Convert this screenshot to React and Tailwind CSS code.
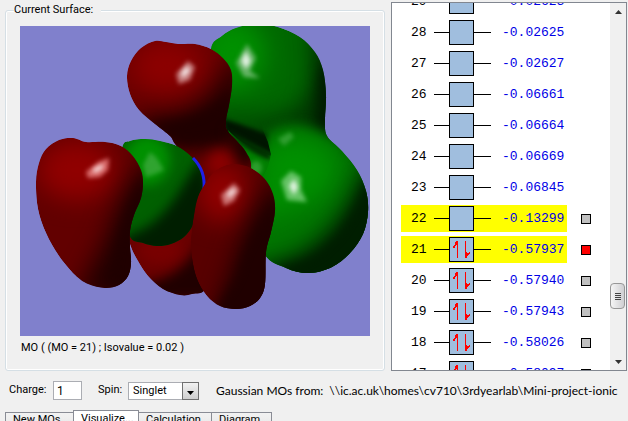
import { useState } from 'react';

const orbitals = [
    { id: 29, energy: '-0.02623' },
    { id: 28, energy: '-0.02625' },
    { id: 27, energy: '-0.02627' },
    { id: 26, energy: '-0.06661' },
    { id: 25, energy: '-0.06664' },
    { id: 24, energy: '-0.06669' },
    { id: 23, energy: '-0.06845' },
    { id: 22, energy: '-0.13299', frontier: true, surface: true },
    { id: 21, energy: '-0.57937', frontier: true, surface: true, occupied: true },
    { id: 20, energy: '-0.57940', surface: true, occupied: true },
    { id: 19, energy: '-0.57943', surface: true, occupied: true },
    { id: 18, energy: '-0.58026', surface: true, occupied: true },
    { id: 17, energy: '-0.58097', surface: true, occupied: true },
];

const tabs = [
    { name: 'New MOs...', width: 'w-[69px]' },
    { name: 'Visualize...', width: 'w-[66px]' },
    { name: 'Calculation...', width: 'w-[74px]' },
    { name: 'Diagram...', width: 'w-[61px]' },
];

// Closed Catmull-Rom curve through the given points
function smooth(points) {
    const n = points.length;
    const at = (i) => points[(i + n) % n];
    let d = `M${at(0)[0]} ${at(0)[1]}`;
    for (let i = 0; i < n; i++) {
        const [a, b, c, e] = [at(i - 1), at(i), at(i + 1), at(i + 2)];
        d += `C${b[0] + (c[0] - a[0]) / 6} ${b[1] + (c[1] - a[1]) / 6} ${c[0] - (e[0] - b[0]) / 6} ${c[1] - (e[1] - b[1]) / 6} ${c[0]} ${c[1]}`;
    }
    return d + 'Z';
}

const lobes = {
    green: smooth([[211, 49], [222, 36], [236, 28], [256, 24], [278, 27], [300, 37], [315, 52], [323, 70], [326, 95], [325, 120], [327, 136], [342, 151], [357, 170], [366, 191], [368, 212], [363, 234], [350, 253], [332, 267], [309, 273], [286, 268], [262, 250], [245, 185], [231, 150], [226, 128], [215, 90]]),
    redTop: smooth([[127, 76], [131, 61], [141, 48], [155, 41], [166, 42], [178, 44], [195, 44], [211, 49], [223, 58], [231, 70], [232, 86], [229, 105], [226, 120], [227, 130], [237, 141], [246, 152], [251, 168], [240, 200], [210, 205], [190, 165], [175, 144], [170, 136], [155, 124], [139, 110], [130, 94]]),
    redBottom: smooth([[129, 235], [131, 247], [138, 261], [148, 276], [163, 289], [180, 295], [192, 294], [206, 287], [212, 240], [195, 205], [160, 220], [135, 225]]),
    greenMid: smooth([[122, 148], [130, 141], [145, 139], [160, 141], [177, 146], [192, 157], [201, 170], [204, 185], [201, 204], [193, 225], [184, 237], [171, 244], [157, 246], [143, 243], [129, 235], [118, 190]]),
    redLeft: smooth([[36, 182], [39, 163], [46, 149], [59, 140], [73, 138], [86, 142], [105, 142], [121, 146], [133, 156], [141, 170], [143, 183], [141, 198], [134, 215], [130, 231], [130, 247], [131, 263], [128, 276], [119, 285], [105, 288], [88, 284], [75, 275], [59, 256], [46, 233], [38, 209]]),
    redFront: smooth([[205, 184], [213, 173], [224, 166], [236, 164], [251, 168], [265, 179], [273, 194], [275, 211], [271, 232], [266, 252], [265, 284], [260, 298], [250, 306], [236, 309], [220, 306], [207, 296], [197, 279], [192, 258], [191, 238], [194, 215], [198, 197]]),
};

function Glint({ points, core, color }) {
    return (
        <g>
            <polygon points={points} fill={color} filter="url(#soft2)" />
            <polygon points={core} fill="#fff" opacity="0.8" filter="url(#soft2)" />
        </g>
    );
}

function Surface() {
    return (
        <svg viewBox="20 26 350 310" preserveAspectRatio="none" className="block min-h-0 w-full flex-1 bg-[#8080cc]" role="img" aria-label="Molecular orbital surface">
            <defs>
                {Object.entries(lobes).map(([name, d]) => (
                    <clipPath id={name} key={name}>
                        <path d={d} />
                    </clipPath>
                ))}
                <clipPath id="greenFront">
                    <path d="M250 270V190L263 176C267 169 270 162 271 154L268 142L262 128V80H380V290H250Z" />
                </clipPath>
                <filter id="soft2" x="-50%" y="-50%" width="200%" height="200%" colorInterpolationFilters="sRGB">
                    <feGaussianBlur stdDeviation="2" />
                </filter>
                <filter id="soft6" x="-50%" y="-50%" width="200%" height="200%" colorInterpolationFilters="sRGB">
                    <feGaussianBlur stdDeviation="6" />
                </filter>
                <filter id="soft12" x="-50%" y="-50%" width="200%" height="200%" colorInterpolationFilters="sRGB">
                    <feGaussianBlur stdDeviation="12" />
                </filter>
            </defs>

            <g clipPath="url(#green)">
                <path d={lobes.green} fill="#006800" />
                <ellipse cx="232" cy="54" rx="34" ry="36" fill="#009000" filter="url(#soft12)" />
                <path d="M310 20L345 50V140H300C315 110 320 70 310 20Z" fill="#001c00" filter="url(#soft12)" />
                <path d="M215 114C250 128 285 122 330 84V132L270 142L218 130Z" fill="#003800" filter="url(#soft12)" />
                <path d="M320 70L335 60V138L314 128Z" fill="#001c00" filter="url(#soft6)" />
                <path d="M222 118C240 124 256 130 268 134L276 156L226 134Z" fill="#001500" filter="url(#soft2)" />
                <path d="M228 130C240 143 254 149 273 157L262 182L240 172Z" fill="#008000" />
                <path d="M228 130C240 137 256 144 271 154L270 160C253 154 239 145 228 130Z" fill="#002c00" filter="url(#soft2)" />
                <ellipse cx="256" cy="168" rx="6" ry="7" fill="#2c9c2c" filter="url(#soft2)" />
                <Glint points="247,44 256,58 250,71 260,78 244,77 236,63" core="246,51 251,61 246,69 241,61" color="#63b363" />

                <g clipPath="url(#greenFront)">
                    <path d="M272 132C290 120 315 127 335 142L385 200L350 290H240V190Z" fill="#007600" filter="url(#soft6)" />
                    <path d="M262 150C285 132 315 134 332 155C345 180 320 200 300 205L258 220Z" fill="#009000" filter="url(#soft12)" />
                    <path d="M385 170V295H250L255 266C310 262 345 225 365 165Z" fill="#001800" filter="url(#soft12)" />
                    <path d="M385 180V290H275L285 266C325 262 352 225 366 180Z" fill="#001e00" filter="url(#soft6)" />
                    <polygon points="278,139 290,132 294,137 284,146" fill="#309e30" filter="url(#soft2)" />
                </g>
                <Glint points="291,171 301,177 301,190 307,202 287,200 281,181" core="294,179 298,187 294,195 289,186" color="#65c365" />
            </g>

            <g clipPath="url(#redTop)">
                <path d={lobes.redTop} fill="#6c0000" />
                <ellipse cx="167" cy="66" rx="36" ry="26" fill="#8c0000" filter="url(#soft12)" />
                <path d="M125 110C162 120 208 119 230 60L245 50V140L205 152L170 150Z" fill="#200000" filter="url(#soft12)" />
                <path d="M140 122C180 124 212 116 232 90V138L182 145Z" fill="#200000" filter="url(#soft6)" />
                <ellipse cx="220" cy="163" rx="13" ry="12" fill="#8a0000" filter="url(#soft6)" />
                <path d="M226 128L256 145L250 172L238 160Z" fill="#200000" filter="url(#soft6)" />
                <Glint points="188,61 195,67 190,80 179,84 176,74" core="187,66 190,71 183,78 181,73" color="#c47878" />
            </g>

            <g clipPath="url(#redBottom)">
                <path d={lobes.redBottom} fill="#6a0000" />
                <ellipse cx="160" cy="250" rx="22" ry="14" fill="#780000" filter="url(#soft6)" />
                <path d="M138 284C165 282 190 268 202 236L220 300H150Z" fill="#200000" filter="url(#soft6)" />
            </g>

            <g clipPath="url(#greenMid)">
                <path d={lobes.greenMid} fill="#006000" />
                <ellipse cx="147" cy="160" rx="23" ry="25" fill="#009000" filter="url(#soft6)" />
                <path d="M205 154C182 178 172 224 125 236V256H216Z" fill="#001e00" filter="url(#soft6)" />
                <polygon points="150,152 156,157 164,170 155,174 146,177 143,165" fill="#30a430" filter="url(#soft2)" />
            </g>

            {/* Sliver of the blue atom behind the centre lobe */}
            <path d="M193 158C201 166 205 177 204 189" fill="none" stroke="#2020e8" strokeWidth="3" />

            <g clipPath="url(#redLeft)">
                <path d={lobes.redLeft} fill="#620000" />
                <ellipse cx="77" cy="170" rx="40" ry="30" fill="#900000" filter="url(#soft12)" />
                <path d="M150 150C131 178 115 208 106 238L74 300H158Z" fill="#200000" filter="url(#soft12)" />
                <path d="M147 165C134 195 114 225 112 290H152Z" fill="#200000" filter="url(#soft6)" />
                <Glint points="109,158 108,170 100,177 88,178 86,172 98,162" core="103,164 102,169 94,173 93,169" color="#d86a6a" />
            </g>

            <g clipPath="url(#redFront)">
                <path d={lobes.redFront} fill="#580000" />
                <ellipse cx="222" cy="192" rx="26" ry="30" fill="#900000" filter="url(#soft12)" />
                <path d="M284 172C259 195 247 222 236 254L214 318H287Z" fill="#200000" filter="url(#soft12)" />
                <path d="M279 190C262 222 244 242 237 277L207 322H276Z" fill="#200000" filter="url(#soft6)" />
                <Glint points="234,183 240,190 234,201 224,206 221,195" core="233,188 236,191 229,198 227,194" color="#cc7474" />
            </g>
        </svg>
    );
}

function OrbitalRow({ orbital, selected, onSelect }) {
    return (
        <li className="flex h-[31px] shrink-0 items-center">
            <div className={`flex h-[27px] w-[166px] shrink-0 items-center ${orbital.frontier ? 'bg-[#ffff00]' : ''}`}>
                <span className="w-[33px] pl-[10px]">{orbital.id}</span>
                <span className="h-px w-[15px] bg-black" />
                <svg viewBox="0 0 25 25" className="h-[25px] w-[25px]" shapeRendering="crispEdges" aria-hidden="true">
                    <rect x="0.5" y="0.5" width="24" height="24" fill="#a0bede" stroke="#000" />
                    {orbital.occupied && (
                        <g fill="#f00">
                            <path d="M8 4H9V21H8ZM8 4V8L6 9V11H4V9L6 8V5Z" />
                            <path d="M16 4H17V21H16ZM17 14L19 17L21 14V16L18 20L17 21Z" />
                        </g>
                    )}
                </svg>
                <span className="h-px w-[17px] bg-black" />
                <span className="pl-[11px] text-[#0000e6]">{orbital.energy}</span>
            </div>
            {orbital.surface && (
                <button
                    type="button"
                    aria-label={`Show surface of MO ${orbital.id}`}
                    onClick={() => onSelect(orbital.id)}
                    className={`ml-[14px] h-[10px] w-[10px] border border-black ${selected ? 'bg-[#ff0000]' : 'bg-[#c0c0c0]'}`}
                />
            )}
        </li>
    );
}

function ScrollBar() {
    return (
        <div className="flex w-4 shrink-0 flex-col items-center bg-[#f0f0f0]">
            <button type="button" aria-label="Scroll up" className="flex h-[17px] w-full items-center justify-center">
                <svg viewBox="0 0 7 4" className="h-1 w-[7px]"><path d="M0 4L3.5 0L7 4Z" fill="#333" /></svg>
            </button>
            <div className="flex w-full flex-1 flex-col">
                <div className="flex-[263]" />
                <div className="flex h-[26px] w-[15px] flex-col items-center justify-center gap-px rounded-sm border border-[#979797] bg-linear-to-r from-[#f5f5f5] to-[#cfcfd2]">
                    <span className="h-px w-[6px] bg-[#444]" />
                    <span className="h-px w-[6px] bg-[#444]" />
                    <span className="h-px w-[6px] bg-[#444]" />
                    <span className="h-px w-[6px] bg-[#444]" />
                </div>
                <div className="flex-[44]" />
            </div>
            <button type="button" aria-label="Scroll down" className="flex h-[17px] w-full items-center justify-center">
                <svg viewBox="0 0 7 4" className="h-1 w-[7px]"><path d="M0 0L3.5 4L7 0Z" fill="#333" /></svg>
            </button>
        </div>
    );
}

export default function App() {
    const [current, setCurrent] = useState(21);
    const [activeTab, setActiveTab] = useState('Visualize...');

    return (
        <div className="flex h-screen flex-col overflow-hidden bg-[#f0f0f0] font-['Roboto',sans-serif] text-[12px] text-black">
            <main className="grid min-h-0 flex-1 grid-cols-[380fr_236fr] grid-rows-[minmax(0,1fr)] gap-[6px] pl-[5px] pr-px pt-[2px]">
                <fieldset className="flex min-w-0 flex-col rounded-[3px] border border-[#d5dfe5] px-[14px] pt-[8px] shadow-[inset_0_0_0_1px_#fff]">
                    <legend className="-ml-[6px] bg-[#f0f0f0] pr-[8px] text-[11px] leading-4">Current Surface:</legend>
                    <div className="flex h-full flex-col">
                        <Surface />
                        <p className="h-[34px] shrink-0 pl-px pt-1 text-[11px] leading-4">MO ( (MO = {current}) ; Isovalue = 0.02 )</p>
                    </div>
                </fieldset>

                <section className="flex min-w-0 overflow-hidden border border-[#828790] bg-white">
                    <ul className="-mt-[17px] flex min-w-0 flex-1 flex-col overflow-hidden pl-[9px] font-['Liberation_Mono',monospace] text-[13px] leading-none">
                        {orbitals.map((orbital) => (
                            <OrbitalRow key={orbital.id} orbital={orbital} selected={orbital.id === current} onSelect={setCurrent} />
                        ))}
                    </ul>
                    <ScrollBar />
                </section>
            </main>

            <form className="flex h-[39px] shrink-0 items-center whitespace-nowrap pl-[9px] text-[11px]">
                <label htmlFor="charge" className="w-[44px]">Charge:</label>
                <input id="charge" defaultValue="1" className="h-[19px] w-[29px] border border-[#abadb3] bg-white px-[3px] text-[12px]" />
                <label htmlFor="spin" className="ml-4 w-[30px]">Spin:</label>
                <div className="relative h-[18px] w-[71px]">
                    <select id="spin" className="block h-full w-full appearance-none border border-[#abadb3] bg-white pl-1">
                        <option>Singlet</option>
                        <option>Triplet</option>
                    </select>
                    <span className="pointer-events-none absolute inset-y-0 right-0 flex w-[17px] items-center justify-center border border-[#707070] bg-linear-to-b from-[#f2f2f2] to-[#cfcfcf]">
                        <svg viewBox="0 0 7 4" className="mt-1 h-1 w-[7px]"><path d="M0 0L3.5 4L7 0Z" /></svg>
                    </span>
                </div>
                <p className="ml-[17px] flex gap-[6px] font-['Lato',sans-serif] text-[12px]">
                    <span>Gaussian MOs from:</span>
                    <span>{'\\\\ic.ac.uk\\homes\\cv710\\3rdyearlab\\Mini-project-ionic'}</span>
                </p>
            </form>

            <nav className="flex h-[11px] shrink-0 items-start overflow-hidden pl-[5px]">
                {tabs.map(({ name, width }) => (
                    <button
                        key={name}
                        type="button"
                        onClick={() => setActiveTab(name)}
                        className={`-mr-px flex shrink-0 items-start whitespace-nowrap border border-[#898c95] pl-[7px] text-[11px] leading-[14px] ${width} ${activeTab === name ? 'h-6 bg-white pt-px' : 'mt-[2px] h-[22px] bg-linear-to-b from-[#f2f2f2] to-[#e4e4e4]'}`}
                    >
                        {name}
                    </button>
                ))}
            </nav>
        </div>
    );
}
